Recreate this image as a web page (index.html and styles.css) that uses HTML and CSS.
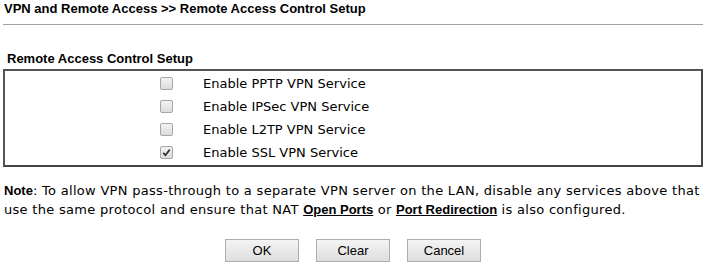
FILE: index.html
```html
<!DOCTYPE html>
<html>
<head>
<meta charset="utf-8">
<link rel="stylesheet" href="styles.css">
</head>
<body>
<div class="page">
  <div class="title">VPN and Remote Access &gt;&gt; Remote Access Control Setup</div>
  <div class="section">Remote Access Control Setup</div>
  <div class="box">
    <div class="row"><span class="cb"></span><span class="label">Enable PPTP VPN Service</span></div>
    <div class="row"><span class="cb"></span><span class="label">Enable IPSec VPN Service</span></div>
    <div class="row"><span class="cb"></span><span class="label">Enable L2TP VPN Service</span></div>
    <div class="row"><span class="cb checked"><svg viewBox="0 0 13 13" width="13" height="13"><path d="M3.2 6.8 L5.4 9.2 L9.8 3.6" fill="none" stroke="#333" stroke-width="1.8"/></svg></span><span class="label">Enable SSL VPN Service</span></div>
  </div>
  <div class="note"><b class="strong">Note</b>: To allow VPN pass-through to a separate VPN server on the LAN, disable any services above that<br>use the same protocol and ensure that NAT <a class="lnk">Open Ports</a> or <a class="lnk">Port Redirection</a> is also configured.</div>
  <div class="buttons">
    <button class="btn">OK</button>
    <button class="btn">Clear</button>
    <button class="btn">Cancel</button>
  </div>
</div>
</body>
</html>
```
FILE: styles.css
```css
html, body { margin: 0; padding: 0; background: #fff; }
.page { padding: 0 4px 0 3px; }
.title {
  font: bold 13px "Liberation Sans", Arial, sans-serif;
  color: #000;
  line-height: 16px;
  padding: 1px 0 7px 1px;
  border-bottom: 1px solid #a0a0a0;
}
.section {
  font: bold 13px "Liberation Sans", Arial, sans-serif;
  line-height: 16px;
  padding: 26px 0 0 4px;
  height: 18px;
}
.box {
  border-top: 2px solid #555;
  border-left: 2px solid #555;
  border-right: 2px solid #444;
  border-bottom: 2px solid #444;
  padding: 1px 0;
}
.row {
  display: flex;
  align-items: center;
  height: 23px;
  padding-left: 155px;
}
.cb {
  width: 11px; height: 11px;
  border: 1px solid #a6a6a6;
  border-radius: 2px;
  background: linear-gradient(#f2f2f2, #dcdcdc);
  position: relative;
  flex: none;
}
.cb svg { position: absolute; left: -1px; top: -1px; }
.label {
  margin-left: 30px;
  font: 13px "DejaVu Sans", Verdana, sans-serif;
  color: #000;
}
.note {
  font: 13px "DejaVu Sans", Verdana, sans-serif;
  letter-spacing: 0.3px;
  line-height: 19px;
  padding: 14px 0 0 1px;
  white-space: nowrap;
  color: #000;
}
.strong, .lnk {
  font-family: "Liberation Sans", Arial, sans-serif;
  font-weight: bold;
  font-size: 13px;
  letter-spacing: 0;
  color: #000;
}
.lnk { text-decoration: underline; }
.buttons {
  display: flex;
  justify-content: center;
  gap: 17px;
  padding-top: 20px;
}
.btn {
  width: 74px; height: 23px;
  border: 1px solid #adadad;
  border-radius: 0;
  background: linear-gradient(#f4f4f4, #dedede);
  font: 13px "Liberation Sans", Arial, sans-serif;
  color: #000;
  padding: 0;
}
```
